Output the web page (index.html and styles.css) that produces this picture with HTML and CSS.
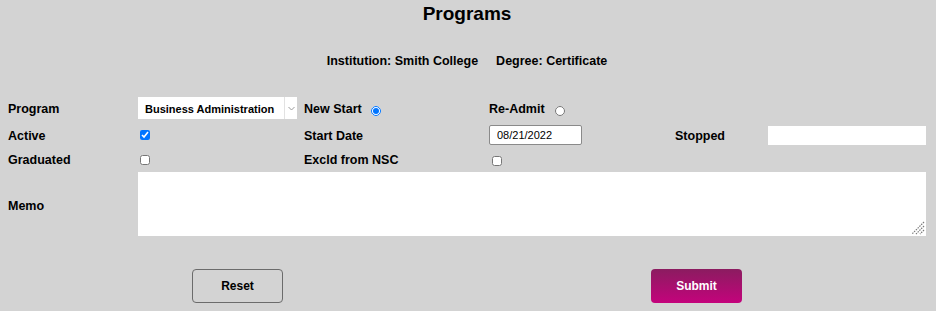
FILE: index.html
```
<!DOCTYPE html>
<html lang="en">
<head>
<meta charset="UTF-8">
<meta name="viewport" content="width=device-width, initial-scale=1.0">
<title>Programs</title>
<link rel="stylesheet" href="styles.css">
</head>

<body>
<h1 class="title">Programs</h1>
<div class="info">
    <span>Institution: Smith College</span>
    <span>Degree: Certificate</span>
</div>

<form class="program-form">
    <label class="lbl">Program</label>
    <div class="select-wrap">
        <select class="select">
            <option>Business Administration</option>
        </select>
        <span class="arrow">
            <svg width="7" height="5" viewBox="0 0 7 5"><path d="M0.5 1 L3.5 4 L6.5 1" fill="none" stroke="#9a9a9a" stroke-width="1"/></svg>
        </span>
    </div>
    <div class="lbl">New Start <input type="radio" name="start" class="radio" checked></div>
    <div class="lbl">Re-Admit <input type="radio" name="start" class="radio readmit"></div>
    <div></div>
    <div></div>

    <label class="lbl">Active</label>
    <div><input type="checkbox" class="check" checked></div>
    <label class="lbl">Start Date</label>
    <div><input type="text" class="date" value="08/21/2022"></div>
    <label class="lbl">Stopped</label>
    <div><input type="text" class="stopped"></div>

    <label class="lbl">Graduated</label>
    <div><input type="checkbox" class="check"></div>
    <label class="lbl">Excld from NSC</label>
    <div><input type="checkbox" class="check nsc"></div>
    <div></div>
    <div></div>

    <label class="lbl memo-lbl">Memo</label>
    <div class="memo-wrap">
        <textarea class="memo"></textarea>
        <svg class="grip" width="14" height="14" viewBox="0 0 14 14">
            <path d="M13 1 L1 13 M13 5 L5 13 M13 9 L9 13" stroke="#7a7a7a" stroke-width="1.2" stroke-dasharray="1.5 1"/>
        </svg>
    </div>
</form>

<div class="actions">
    <div class="action"><button type="button" class="btn reset">Reset</button></div>
    <div class="action"><button type="button" class="btn submit">Submit</button></div>
</div>
</body>
</html>
```

FILE: styles.css
```
body {
    margin: 0;
    padding: 0 10px 0 8px;
    background-color: #d3d3d3;
    font-family: "Liberation Sans", Arial, sans-serif;
    color: #000;
}
.title {
    margin: 0;
    padding-top: 2px;
    font-size: 19px;
    line-height: 24px;
    text-align: center;
}
.info {
    margin-top: 27px;
    display: flex;
    justify-content: center;
    gap: 18px;
    font-size: 12.5px;
    font-weight: bold;
    line-height: 16px;
}
.program-form {
    margin-top: 28px;
    display: grid;
    grid-template-columns: 130px 166px 185px 186px 93px 158px;
    grid-template-rows: 22px 24px 17px 64px;
    row-gap: 4px;
    align-items: center;
}
.lbl {
    font-size: 12.5px;
    font-weight: bold;
    padding-top: 1px;
}
.select-wrap {
    display: flex;
    width: 159px;
    height: 22px;
    background: white;
}
.select {
    flex: 1;
    appearance: none;
    border: none;
    background: white;
    padding: 2px 0 0 7px;
    font-family: inherit;
    font-size: 11px;
    font-weight: bold;
    color: #000;
    outline: none;
}
.arrow {
    width: 12px;
    border-left: 1px solid #e2e2e2;
    display: flex;
    align-items: center;
    justify-content: center;
}
.radio {
    width: 10px;
    height: 10px;
    margin: 0 0 0 6px;
    vertical-align: -3px;
}
.radio.readmit {
    margin-left: 7px;
}
.check {
    display: block;
    width: 10px;
    height: 10px;
    margin: 0 0 0 2px;
}
.check.nsc {
    margin-left: 3px;
    margin-top: 2px;
}
.date {
    box-sizing: border-box;
    width: 93px;
    height: 20px;
    border: 1px solid #8a8a8a;
    border-radius: 2px;
    padding: 0 0 0 7px;
    font-family: inherit;
    font-size: 11px;
    color: #000;
    background: white;
}
.stopped {
    box-sizing: border-box;
    display: block;
    width: 158px;
    height: 19px;
    border: none;
    background: white;
}
.memo-wrap {
    grid-column: 2 / 7;
    position: relative;
    height: 64px;
}
.memo {
    box-sizing: border-box;
    display: block;
    width: 788px;
    height: 64px;
    border: none;
    background: white;
    margin: 0;
    resize: none;
}
.grip {
    position: absolute;
    right: 1px;
    bottom: 1px;
}
.memo-lbl {
    padding-top: 4px;
}
.actions {
    margin-top: 33px;
    display: grid;
    grid-template-columns: 1fr 1fr;
}
.action {
    display: flex;
    justify-content: center;
}
.btn {
    width: 91px;
    height: 34px;
    border-radius: 4px;
    font-family: inherit;
    font-size: 12px;
    font-weight: bold;
    cursor: pointer;
}
.btn.reset {
    background: transparent;
    border: 1px solid #6b6b6b;
    color: #000;
}
.btn.submit {
    background: linear-gradient(to bottom, #8b1c60, #c4037c);
    border: none;
    color: white;
}
```
